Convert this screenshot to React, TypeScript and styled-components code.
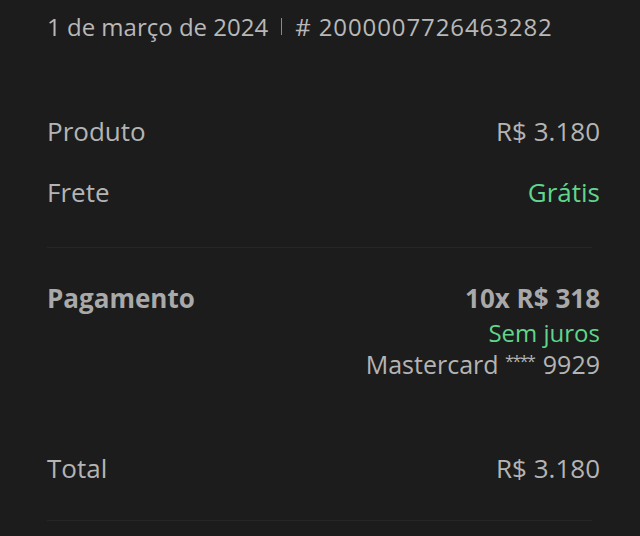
import React from "react";
import styled, { createGlobalStyle } from "styled-components";

const Global = createGlobalStyle`
  html, body { margin: 0; padding: 0; background: #1c1c1c; }
  body { font-family: "Open Sans", Lato, sans-serif; }
`;

const Page = styled.div`
  width: 640px;
  height: 536px;
  background: #1c1c1c;
  color: #b4b4b4;
  padding: 0 40px 0 47px;
  box-sizing: border-box;
  overflow: hidden;
`;

const Header = styled.div`
  display: flex;
  align-items: center;
  gap: 13px;
  height: 52px;
  font-size: 24px;
  color: #b8b8b8;
`;

const OrderNo = styled.span`
  letter-spacing: 0.9px;
`;

const Sep = styled.span`
  width: 1px;
  height: 17px;
  background: #8a8a8a;
`;

const Section = styled.div<{ $pt: number; $pb: number; $divider?: boolean }>`
  padding-top: ${(p) => p.$pt}px;
  padding-bottom: ${(p) => p.$pb}px;
  margin-right: 8px;
  border-bottom: 1px solid ${(p) => (p.$divider ? "#262626" : "transparent")};
`;

const Row = styled.div<{ $h: number }>`
  display: flex;
  justify-content: space-between;
  align-items: flex-start;
  margin-right: -8px;
  min-height: ${(p) => p.$h}px;
`;

const Label = styled.div<{ $bold?: boolean }>`
  font-size: 26px;
  line-height: 30px;
  font-weight: ${(p) => (p.$bold ? 700 : 400)};
  color: ${(p) => (p.$bold ? "#a9a9a9" : "#b4b4b4")};
`;

const Values = styled.div`
  display: flex;
  flex-direction: column;
  align-items: flex-end;
`;

const Value = styled.div<{ $green?: boolean; $bold?: boolean; $size?: number; $mt?: number }>`
  font-size: ${(p) => p.$size ?? 26}px;
  line-height: 30px;
  margin-top: ${(p) => p.$mt ?? 0}px;
  font-weight: ${(p) => (p.$bold ? 700 : 400)};
  color: ${(p) => (p.$green ? "#5fd68b" : p.$bold ? "#a9a9a9" : "#b4b4b4")};
`;

const Stars = styled.span`
  font-size: 16px;
  vertical-align: 7px;
  letter-spacing: -1.5px;
  margin-right: 2px;
`;

export default function App() {
  return (
    <>
      <Global />
      <Page>
        <Header>
          <span>1 de março de 2024</span>
          <Sep />
          <OrderNo># 2000007726463282</OrderNo>
        </Header>
        <Section $pt={64} $pb={40} $divider>
          <Row $h={61}>
            <Label>Produto</Label>
            <Value>R$ 3.180</Value>
          </Row>
          <Row $h={30}>
            <Label>Frete</Label>
            <Value $green>Grátis</Value>
          </Row>
        </Section>
        <Section $pt={35} $pb={0}>
          <Row $h={93}>
            <Label $bold>Pagamento</Label>
            <Values>
              <Value $bold>10x R$ 318</Value>
              <Value $green $size={24} $mt={5}>Sem juros</Value>
              <Value $size={25} $mt={-2}>
                Mastercard <Stars>****</Stars> 9929
              </Value>
            </Values>
          </Row>
        </Section>
        <Section $pt={73} $pb={37} $divider>
          <Row $h={30}>
            <Label>Total</Label>
            <Value>R$ 3.180</Value>
          </Row>
        </Section>
      </Page>
    </>
  );
}
